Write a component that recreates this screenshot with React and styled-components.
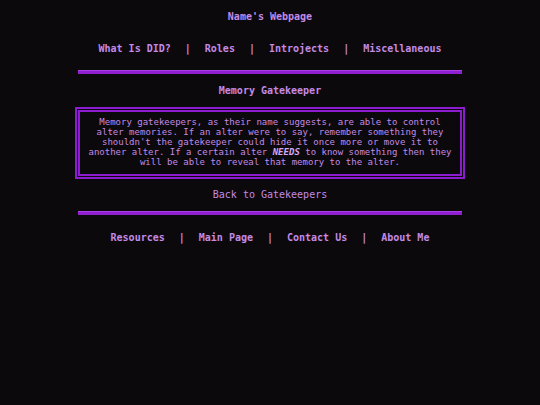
import React from "react";
import styled, { createGlobalStyle } from "styled-components";

const GlobalStyle = createGlobalStyle`
  html, body {
    margin: 0;
    padding: 0;
    background: #0b090b;
  }
  body {
    font-family: "DejaVu Sans Mono", "Liberation Mono", monospace;
    color: #c48ae6;
  }
`;

const Page = styled.div`
  width: 540px;
  min-height: 405px;
  display: flex;
  flex-direction: column;
  align-items: center;
  padding-top: 11px;
  box-sizing: border-box;
`;

const SiteTitle = styled.h1`
  margin: 0;
  font-size: 10px;
  line-height: 12px;
  font-weight: bold;
`;

const Nav = styled.nav`
  display: flex;
  align-items: center;
  gap: 14px;
  margin-top: ${(p) => p.$top || 0}px;
  font-size: 10px;
  line-height: 12px;
  font-weight: bold;
`;

const NavLink = styled.a`
  color: #c48ae6;
  text-decoration: none;
`;

const Sep = styled.span`
  color: #c48ae6;
`;

const Rule = styled.div`
  width: 384px;
  height: 4px;
  margin-top: ${(p) => p.$top}px;
  background: #8f1fd0;
  border-top: 1px solid #a640e4;
  box-sizing: border-box;
`;

const Heading = styled.h2`
  margin: 11px 0 0;
  font-size: 10px;
  line-height: 12px;
  font-weight: bold;
`;

const InfoBox = styled.div`
  width: 390px;
  margin-top: 10px;
  box-sizing: border-box;
  border: 5px double #8c1cd0;
  padding: 5px 8px 7px;
  font-size: 9px;
  line-height: 10px;
  text-align: center;
  color: #c48ae6;
`;

const Strong = styled.em`
  font-weight: bold;
  font-style: italic;
  color: #d6a8f4;
`;

const BackLink = styled.a`
  margin-top: 10px;
  font-size: 10px;
  line-height: 12px;
  color: #c48ae6;
  text-decoration: none;
`;

const topLinks = ["What Is DID?", "Roles", "Introjects", "Miscellaneous"];
const bottomLinks = ["Resources", "Main Page", "Contact Us", "About Me"];

const LinkRow = ({ links, top }) => (
  <Nav $top={top}>
    {links.map((l, i) => (
      <React.Fragment key={l}>
        {i > 0 && <Sep>|</Sep>}
        <NavLink href="#">{l}</NavLink>
      </React.Fragment>
    ))}
  </Nav>
);

export default function App() {
  return (
    <Page>
      <GlobalStyle />
      <SiteTitle>Name's Webpage</SiteTitle>
      <LinkRow links={topLinks} top={20} />
      <Rule $top={15} />
      <Heading>Memory Gatekeeper</Heading>
      <InfoBox>
        Memory gatekeepers, as their name suggests, are able to control alter
        memories. If an alter were to say, remember something they shouldn't
        the gatekeeper could hide it once more or move it to another alter. If
        a certain alter <Strong>NEEDS</Strong> to know something then they will
        be able to reveal that memory to the alter.
      </InfoBox>
      <BackLink href="#">Back to Gatekeepers</BackLink>
      <Rule $top={10} />
      <LinkRow links={bottomLinks} top={17} />
    </Page>
  );
}
